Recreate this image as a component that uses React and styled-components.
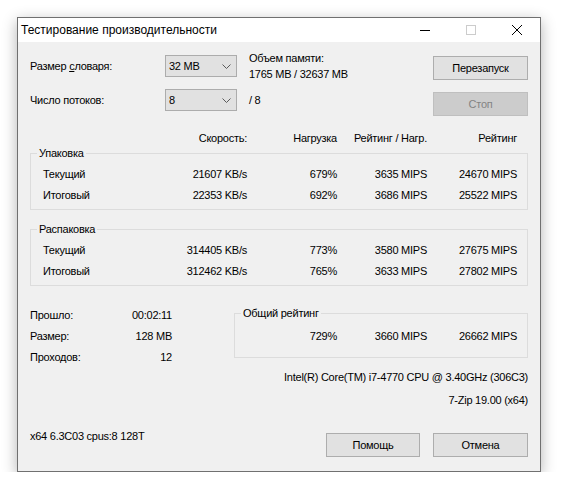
import React from "react";
import styled, { createGlobalStyle } from "styled-components";

const GlobalStyle = createGlobalStyle`
  html, body {
    margin: 0;
    background: #ffffff;
  }
  body {
    font-family: "Liberation Sans", Arial, sans-serif;
    font-size: 11px;
    letter-spacing: -0.25px;
    color: #000;
  }
`;

const COLS = "117px 87px 90px 90px 90px";

const Window = styled.div`
  box-sizing: border-box;
  margin: 17px 0 0 17px;
  width: 524px;
  height: 455px;
  border: 1px solid #707070;
  box-shadow: 0 4px 14px rgba(0, 0, 0, 0.3);
  display: flex;
  flex-direction: column;
  background: #f0f0f0;
`;

const TitleBar = styled.div`
  height: 24px;
  background: #fff;
  display: flex;
  align-items: center;
  flex-shrink: 0;
`;

const Title = styled.div`
  flex: 1;
  padding-left: 3px;
  font-family: "Liberation Sans", Arial, sans-serif;
  font-size: 12px;
  letter-spacing: 0;
`;

const CaptionButton = styled.div`
  width: 46px;
  height: 24px;
  display: flex;
  align-items: center;
  justify-content: center;
`;

const Body = styled.div`
  flex: 1;
  display: flex;
  flex-direction: column;
  padding: 13px 12px 14px 12px;
`;

const TopSection = styled.div`
  display: flex;
  justify-content: space-between;
  align-items: flex-start;
`;

const SettingsGrid = styled.div`
  display: grid;
  grid-template-columns: 123px 72px auto;
  grid-template-rows: 22px 22px;
  column-gap: 12px;
  row-gap: 12px;
  align-items: center;
`;

const Label = styled.div`
  line-height: 16px;
`;

const Combo = styled.div`
  box-sizing: border-box;
  height: 22px;
  border: 1px solid #acacac;
  background: #e1e1e1;
  display: flex;
  align-items: center;
  justify-content: space-between;
  padding: 0 5px 0 3px;
`;

const MemoryInfo = styled.div`
  align-self: start;
  margin-top: -5px;
  line-height: 16px;
`;

const ButtonColumn = styled.div`
  display: flex;
  flex-direction: column;
  gap: 12px;
  margin-top: 1px;
`;

const Button = styled.div`
  box-sizing: border-box;
  width: ${(p) => p.$width || 95}px;
  height: 24px;
  border: 1px solid ${(p) => (p.$disabled ? "#bfbfbf" : "#adadad")};
  background: ${(p) => (p.$disabled ? "#cccccc" : "#e1e1e1")};
  color: ${(p) => (p.$disabled ? "#838383" : "#000")};
  display: flex;
  align-items: center;
  justify-content: center;
`;

const HeaderRow = styled.div`
  display: grid;
  grid-template-columns: ${COLS};
  margin: 15px 0 0 13px;
  line-height: 14px;
`;

const Cell = styled.div`
  text-align: ${(p) => (p.$left ? "left" : "right")};
  white-space: nowrap;
`;

const Group = styled.fieldset`
  margin: ${(p) => p.$top || 0}px 0 0 0;
  padding: 0;
  border: 1px solid #dcdcdc;
  min-width: 0;
  box-sizing: border-box;
  width: 100%;
`;

const Legend = styled.legend`
  margin-left: 6px;
  padding: 0 2px;
  line-height: 16px;
`;

const GroupRows = styled.div`
  display: grid;
  grid-template-columns: ${(p) => p.$cols || COLS};
  grid-auto-rows: 21px;
  align-items: center;
  padding: ${(p) => p.$pad || "2px 10px 4px 12px"};
`;

const BottomSection = styled.div`
  display: flex;
  justify-content: space-between;
  align-items: flex-start;
  margin-top: 18px;
`;

const Stats = styled.div`
  width: 142px;
  display: grid;
  grid-template-columns: auto auto;
  justify-content: space-between;
  grid-auto-rows: 21px;
  align-items: center;
`;

const RightColumn = styled.div`
  width: 294px;
  display: flex;
  flex-direction: column;
  align-items: flex-end;
  margin-top: 1px;
`;

const InfoLine = styled.div`
  line-height: 16px;
  margin-top: ${(p) => p.$top}px;
  white-space: nowrap;
`;

const Footer = styled.div`
  margin-top: auto;
  display: flex;
  align-items: flex-start;
`;

const FooterText = styled.div`
  flex: 1;
  line-height: 16px;
`;

const FooterButtons = styled.div`
  display: flex;
  gap: 13px;
  margin-top: 5px;
`;

const Chevron = () => (
  <svg width="9" height="5" viewBox="0 0 9 5">
    <polyline points="0.5,0.5 4.5,4.5 8.5,0.5" fill="none" stroke="#5a5a5a" strokeWidth="1" />
  </svg>
);

const rowsPack = [
  ["Текущий", "21607 KB/s", "679%", "3635 MIPS", "24670 MIPS"],
  ["Итоговый", "22353 KB/s", "692%", "3686 MIPS", "25522 MIPS"],
];

const rowsUnpack = [
  ["Текущий", "314405 KB/s", "773%", "3580 MIPS", "27675 MIPS"],
  ["Итоговый", "312462 KB/s", "765%", "3633 MIPS", "27802 MIPS"],
];

const renderRows = (rows) =>
  rows.map((r) =>
    r.map((v, i) => (
      <Cell key={r[0] + i} $left={i === 0}>
        {v}
      </Cell>
    ))
  );

export default function App() {
  return (
    <>
      <GlobalStyle />
      <Window>
        <TitleBar>
          <Title>Тестирование производительности</Title>
          <CaptionButton>
            <svg width="10" height="10" viewBox="0 0 10 10">
              <line x1="0" y1="5.5" x2="10" y2="5.5" stroke="#000" strokeWidth="1" />
            </svg>
          </CaptionButton>
          <CaptionButton>
            <svg width="10" height="10" viewBox="0 0 10 10">
              <rect x="0.5" y="0.5" width="9" height="9" fill="none" stroke="#cccccc" strokeWidth="1" />
            </svg>
          </CaptionButton>
          <CaptionButton>
            <svg width="10" height="10" viewBox="0 0 10 10">
              <line x1="0" y1="0" x2="10" y2="10" stroke="#000" strokeWidth="1" />
              <line x1="10" y1="0" x2="0" y2="10" stroke="#000" strokeWidth="1" />
            </svg>
          </CaptionButton>
        </TitleBar>

        <Body>
          <TopSection>
            <SettingsGrid>
              <Label>
                Размер <u>с</u>ловаря:
              </Label>
              <Combo>
                <span>32 MB</span>
                <Chevron />
              </Combo>
              <MemoryInfo>
                Объем памяти:
                <br />
                1765 MB / 32637 MB
              </MemoryInfo>
              <Label>Число потоков:</Label>
              <Combo>
                <span>8</span>
                <Chevron />
              </Combo>
              <Label>/ 8</Label>
            </SettingsGrid>
            <ButtonColumn>
              <Button>Перезапуск</Button>
              <Button $disabled>Стоп</Button>
            </ButtonColumn>
          </TopSection>

          <HeaderRow>
            <Cell $left></Cell>
            <Cell>Скорость:</Cell>
            <Cell>Нагрузка</Cell>
            <Cell>Рейтинг / Нагр.</Cell>
            <Cell>Рейтинг</Cell>
          </HeaderRow>

          <Group>
            <Legend>Упаковка</Legend>
            <GroupRows>{renderRows(rowsPack)}</GroupRows>
          </Group>

          <Group $top={11}>
            <Legend>Распаковка</Legend>
            <GroupRows>{renderRows(rowsUnpack)}</GroupRows>
          </Group>

          <BottomSection>
            <Stats>
              <Cell $left>Прошло:</Cell>
              <Cell>00:02:11</Cell>
              <Cell $left>Размер:</Cell>
              <Cell>128 MB</Cell>
              <Cell $left>Проходов:</Cell>
              <Cell>12</Cell>
            </Stats>
            <RightColumn>
              <Group>
                <Legend>Общий рейтинг</Legend>
                <GroupRows $cols="102px 90px 90px" $pad="4px 10px 11px 0">
                  <Cell>729%</Cell>
                  <Cell>3660 MIPS</Cell>
                  <Cell>26662 MIPS</Cell>
                </GroupRows>
              </Group>
              <InfoLine $top={11}>Intel(R) Core(TM) i7-4770 CPU @ 3.40GHz (306C3)</InfoLine>
              <InfoLine $top={7}>7-Zip 19.00 (x64)</InfoLine>
            </RightColumn>
          </BottomSection>

          <Footer>
            <FooterText>x64 6.3C03 cpus:8 128T</FooterText>
            <FooterButtons>
              <Button $width={94}>Помощь</Button>
              <Button $width={95}>Отмена</Button>
            </FooterButtons>
          </Footer>
        </Body>
      </Window>
    </>
  );
}
